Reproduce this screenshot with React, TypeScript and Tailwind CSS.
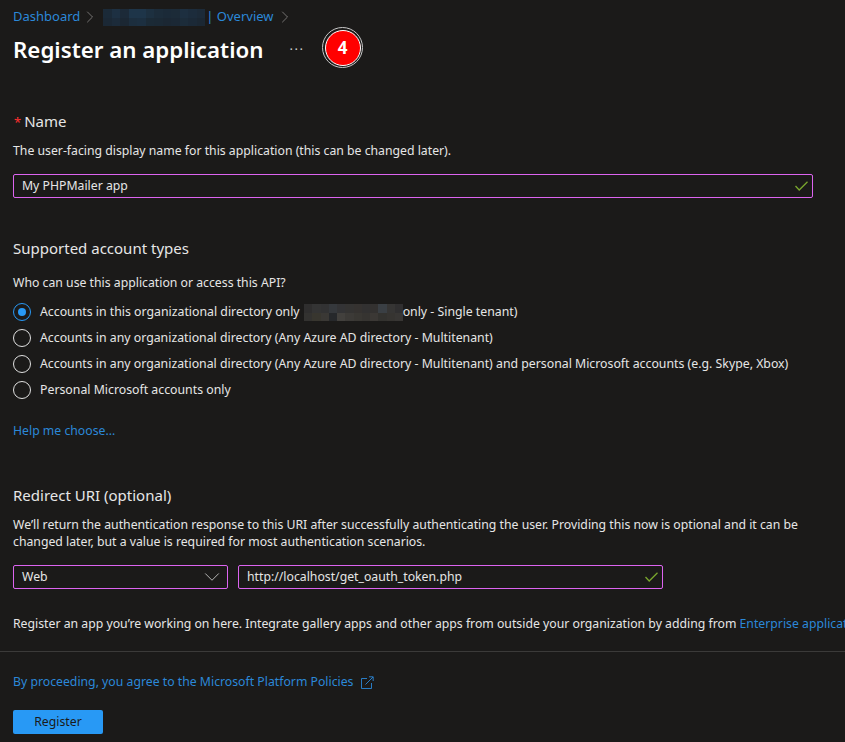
import { ChevronDown, ChevronRight } from "lucide-react";

const blueCells = [
  ["#1b2a38", "#1d3042", "#1c2a38", "#1e3549", "#1e3549", "#1d3040", "#1c2c3a", "#1b2a38", "#1c2b38", "#1d2f40", "#1c2c3c", "#1c2a38"],
  ["#1b2835", "#1c2b3a", "#1b2733", "#1c2e3e", "#1c2f40", "#1b2a36", "#1b2935", "#1b2733", "#1b2835", "#1c2c3a", "#1b2937", "#1b2733"],
];

const grayCells = [
  ["#2f2e2e", "#343434", "#323233", "#35383c", "#333335", "#343332", "#353230", "#323131", "#333130", "#3a3f44", "#363534", "#302f30"],
  ["#333230", "#38362f", "#3a3835", "#26282b", "#42403d", "#3c3a37", "#393733", "#363431", "#3b3835", "#33322f", "#363431", "#383634"],
];

function Pixelated({ cells, className }: { cells: string[][]; className: string }) {
  return (
    <svg viewBox="0 0 12 2" preserveAspectRatio="none" shapeRendering="crispEdges" className={className}>
      {cells.map((row, y) =>
        row.map((fill, x) => <rect key={`${x}-${y}`} x={x} y={y} width={1} height={1} fill={fill} />),
      )}
    </svg>
  );
}

function ValidCheck() {
  return (
    <svg width="13" height="10" viewBox="0 0 13 10" fill="none" stroke="#7aa62e" strokeWidth="1.3" className="shrink-0">
      <path d="M0.5 5 L4.2 9 L12.5 0.8" />
    </svg>
  );
}

function Radio({ checked, children }: { checked?: boolean; children: React.ReactNode }) {
  return (
    <div className="flex h-[26px] items-center gap-[9px] text-[12.3px]">
      <span
        className={`flex size-[18px] shrink-0 items-center justify-center rounded-full border ${
          checked ? "border-[#2899f5]" : "border-[#e0e0e0]"
        }`}
      >
        {checked && <span className="size-2 rounded-full bg-[#2899f5]" />}
      </span>
      <span className="flex items-center whitespace-nowrap">{children}</span>
    </div>
  );
}

export default function App() {
  return (
    <div
      className="relative h-[742px] w-[845px] overflow-hidden bg-[#1b1a19] text-[12.25px] text-[#e6e6e6]"
      style={{ fontFamily: '"Noto Sans", sans-serif' }}
    >
      <div className="px-[13px]">
        <nav className="flex h-[33px] items-center whitespace-nowrap pt-[1px] text-[13px] text-[#2b88d8]">
          <span>Dashboard</span>
          <ChevronRight size={20} strokeWidth={0.8} className="text-[#a19f9d]" />
          <Pixelated cells={blueCells} className="ml-[3px] h-[17px] w-[102px]" />
          <span className="ml-[1px]">| Overview</span>
          <ChevronRight size={20} strokeWidth={0.8} className="ml-[1px] text-[#a19f9d]" />
        </nav>

        <div className="flex h-[34px] items-center">
          <h1 className="text-[22.3px] font-semibold text-white">Register an application</h1>
          <span className="ml-[26px] text-[13px] tracking-[1.5px] text-[#d0d0d0]">···</span>
        </div>

        <label className="mt-[44px] block h-5 text-[15px] leading-[20px]">
          <span className="ml-[1px] mr-[3px] text-[13px] leading-none text-[#ff3030]">*</span>Name
        </label>
        <p className="mt-[10px] leading-[20px]">The user-facing display name for this application (this can be changed later).</p>
        <div className="mt-[13px] flex h-6 w-[800px] items-center justify-between rounded-[2px] border border-[#dc64f0] pl-2 pr-[4px]">
          <span>My PHPMailer app</span>
          <ValidCheck />
        </div>

        <h2 className="mt-[40px] text-[15px] leading-[20px]">Supported account types</h2>
        <p className="mt-[15px] leading-[20px]">Who can use this application or access this API?</p>
        <div className="mt-[6px]">
          <Radio checked>
            Accounts in this organizational directory only
            <Pixelated cells={grayCells} className="ml-1 h-[17px] w-[99px]" />
            only - Single tenant)
          </Radio>
          <Radio>Accounts in any organizational directory (Any Azure AD directory - Multitenant)</Radio>
          <Radio>
            Accounts in any organizational directory (Any Azure AD directory - Multitenant) and personal Microsoft accounts (e.g. Skype, Xbox)
          </Radio>
          <Radio>Personal Microsoft accounts only</Radio>
        </div>
        <a className="mt-[18px] block leading-[20px] text-[#2b88d8]">Help me choose...</a>

        <h2 className="mt-[44px] text-[15px] leading-[20px]">Redirect URI (optional)</h2>
        <p className="mt-[11px] w-[815px] leading-[17px]">
          We’ll return the authentication response to this URI after successfully authenticating the user. Providing this now is optional and it can be changed later, but a value is required for most authentication scenarios.
        </p>
        <div className="mt-[15px] flex gap-[10px]">
          <div className="flex h-6 w-[215px] items-center justify-between rounded-[2px] border border-[#dc64f0] pl-2 pr-[2px]">
            <span>Web</span>
            <ChevronDown size={26} strokeWidth={0.7} className="text-[#e6e6e6]" />
          </div>
          <div className="flex h-6 w-[425px] items-center justify-between rounded-[2px] border border-[#dc64f0] pl-2 pr-[4px]">
            <span>http://localhost/get_oauth_token.php</span>
            <ValidCheck />
          </div>
        </div>
        <p className="mt-[25px] whitespace-nowrap leading-[20px]">
          Register an app you’re working on here. Integrate gallery apps and other apps from outside your organization by adding from{" "}
          <a className="text-[#2b88d8]">Enterprise applications</a>
        </p>
      </div>

      <div className="mt-[17px] border-t border-[#3b3a39] px-[13px]">
        <a className="mt-[20px] flex items-center gap-[7px] leading-[20px] text-[#2b88d8]">
          By proceeding, you agree to the Microsoft Platform Policies
          <svg width="13" height="13" viewBox="0 0 13 13" fill="none" stroke="#2b88d8" strokeWidth="0.9">
            <path d="M6 2.5 H0.5 V12.5 H10.5 V7" />
            <path d="M4.5 8.5 L12 1 M8 0.8 H12.2 V5" />
          </svg>
        </a>
        <button className="mt-[18px] flex h-6 w-[90px] items-center justify-center rounded-[2px] bg-[#2899f5] text-[#1b1a19]">
          Register
        </button>
      </div>

      <div className="absolute left-[322px] top-[27px] flex size-[41px] items-center justify-center rounded-full border border-[#c8c8c8] bg-[#1b1a19]">
        <div className="flex size-[36px] items-center justify-center rounded-full border border-white bg-[#ff0000] text-[17px] font-bold text-white">
          4
        </div>
      </div>
    </div>
  );
}
